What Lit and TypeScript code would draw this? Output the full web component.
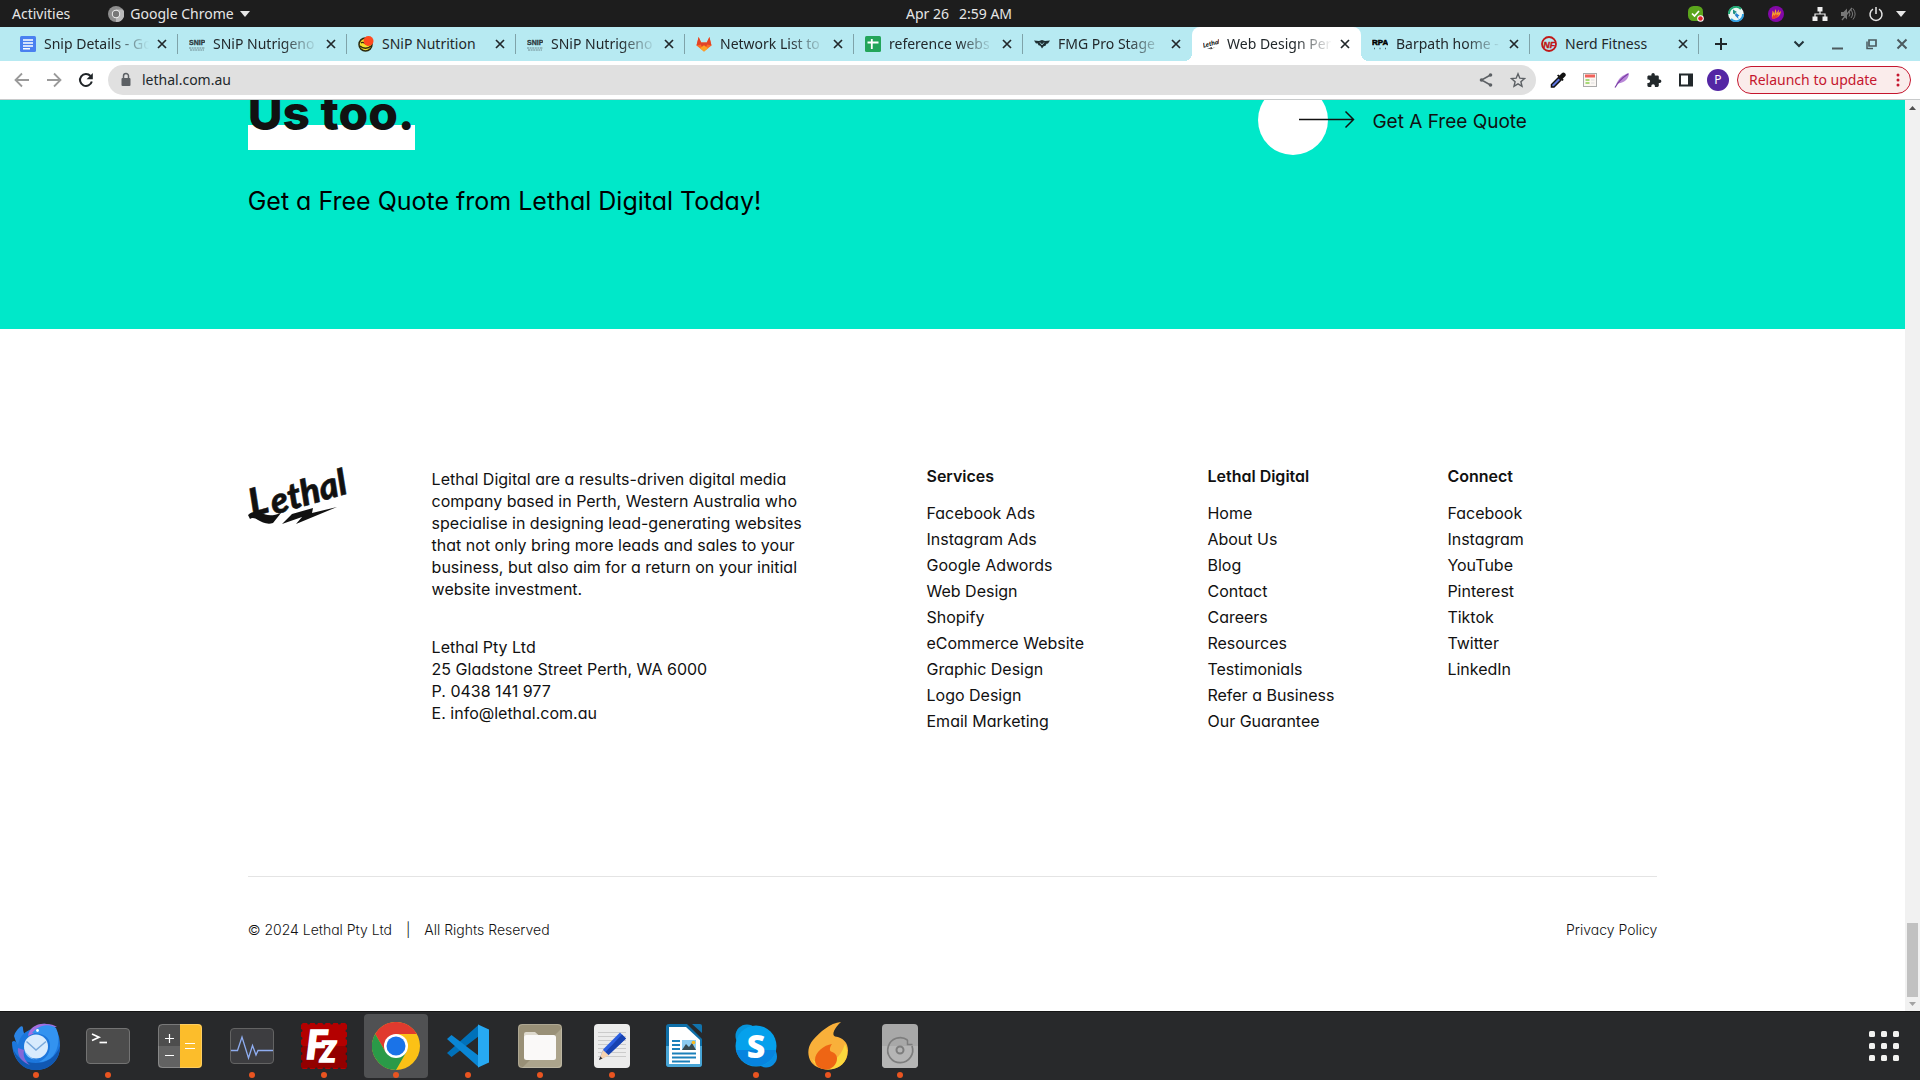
import { LitElement, html, svg, css, nothing, TemplateResult } from "lit";
import { customElement } from "lit/decorators.js";
import { classMap } from "lit/directives/class-map.js";

const icon = (size: number, body: unknown, w = 24, h = 24, width = size) =>
  html`<svg class="icon" width=${width} height=${size} viewBox="0 0 ${w} ${h}" fill="none" aria-hidden="true">${body}</svg>`;

/* ---------- favicons (16 x 16) ---------- */
const favDocs = svg`<rect x="0" y="0" width="16" height="16" rx="1.5" fill="#4a80f0"/><path d="M3 4h10M3 7h10M3 9.900h10M3 12.700h7" stroke="#fff" stroke-width="1.500"/>`;
const favSnip = svg`<text x="0" y="9" font-family="Liberation Sans Narrow, Liberation Sans" font-weight="700" font-size="7" fill="#2c3a40" stroke="#2c3a40" stroke-width=".3">SNiP</text><path d="M0 12h16M1 14h14" stroke="#6f8a90" stroke-width="1" stroke-dasharray="2 .6"/>`;
const favNutrition = svg`<circle cx="7.500" cy="8.500" r="6.500" fill="#f4e02c" stroke="#2c2a10" stroke-width="1.500"/><path d="M2 10c3 3 8 3 11 0M3 7c2-2 4 1 7 2" stroke="#2c2a10" stroke-width="1.300"/><circle cx="10.500" cy="5" r="5" fill="#ff4a1f"/>`;
const favGitlab = svg`<path d="M8 15.500L.5 9.500 2.600 1l2.600 5.500h5.600L13.400 1l2.100 8.500z" fill="#fc6d26"/><path d="M.5 9.500L2.600 1l2.600 5.500h5.600L13.400 1l2.100 8.500-4.300-1L8 15.500 4.800 8.500z" fill="#e24329"/><path d="M8 15.500L4 12.300l4-3 4 3z" fill="#fca326"/>`;
const favSheets = svg`<rect x="0" y="0" width="16" height="16" rx="1.500" fill="#23a55a"/><path d="M2.500 6.500h11M6.800 3v10" stroke="#fff" stroke-width="1.800"/>`;
const favFmg = svg`<path d="M0 4.500l5 .5 3-1 3 1 5-.5-2 3-1.500.3-1 2-1.800.4L8 12.500l-1.700-2.800-1.800-.4-1-2L2 7.500z" fill="#1f3034"/><path d="M6 6.500l2 2.500 2-2.500" stroke="#b7eaf2" stroke-width=".8"/>`;
const favLethal = svg`<text x="0" y="10" transform="rotate(-14 7 9)" font-family="Lato" font-style="italic" font-weight="900" font-size="6.500" fill="#111">Lethal</text><path d="M4 13l5-2-.5 1.500 4-1.500-5 2.500.5-1z" fill="#111"/>`;
const favRpa = svg`<text x="0" y="8.500" font-family="Liberation Sans" font-weight="700" font-size="8" fill="#000" stroke="#000" stroke-width=".5">RPA</text><path d="M2 12.500h1M7.500 12.500h1M13 12.500h1" stroke="#47616a" stroke-width="1.500"/>`;
const favNerd = svg`<circle cx="8" cy="8" r="7" stroke="#c01818" stroke-width="1.800"/><text x="2.300" y="11.500" font-family="Liberation Sans" font-style="italic" font-weight="700" font-size="9" fill="#c01818" stroke="#c01818" stroke-width=".4">NF</text>`;

interface Tab { title: string; fav: unknown; active?: boolean; whole?: boolean; }
const TABS: Tab[] = [
  { title: "Snip Details - Go", fav: favDocs },
  { title: "SNiP Nutrigeno", fav: favSnip },
  { title: "SNiP Nutrition", fav: favNutrition, whole: true },
  { title: "SNiP Nutrigeno", fav: favSnip },
  { title: "Network List to", fav: favGitlab },
  { title: "reference webs", fav: favSheets },
  { title: "FMG Pro Stage", fav: favFmg },
  { title: "Web Design Per", fav: favLethal, active: true },
  { title: "Barpath home -", fav: favRpa },
  { title: "Nerd Fitness", fav: favNerd, whole: true },
];

const closeGlyph = icon(10, svg`<path d="M1 1l8 8M9 1l-8 8" stroke="currentColor" stroke-width="1.700"/>`, 10, 10);

/* ---------- dock icons (48 x 48) ---------- */
const thunderbird = svg`
  <path d="M2 14c1-4 3-6 6-9 1-1 3-1 3 1 0 3 1 6 3 8l-6 18z" fill="#2a83e4"/>
  <path d="M0 20c2-2 4-1 6 3 2-10 8-14 14-16 5-5 14-7 21-3 1 1 2 2 3 4 3 4 4 10 4 16 0 14-10 24-24 24S0 36 0 20z" fill="#1c77dd"/>
  <path d="M1 27c4 9 12 14 23 14s20-6 24-17c0 14-10 24-24 24S4 39 1 27z" fill="#1158b2"/>
  <path d="M16 14C17 6 25 1 34 2c5 0 8 1 11 3-5 0-10 0-14 2-5 2-8 4-15 7z" fill="#a46fe0"/>
  <path d="M20 11C26 3 38 1 44 6c4 8 3 20-3 28-4 4-9 6-14 6 8-4 11-9 11-17 0-8-7-12-18-12z" fill="#3393f0"/>
  <path d="M6 26c-1 8 4 14 12 17-6-5-7-10-6-15z" fill="#8468d8"/>
  <circle cx="24" cy="24.500" r="12" fill="#d8ebfd"/>
  <path d="M14.500 19.500L24 28l10-8.500" stroke="#79a9dc" stroke-width="1.500"/>
  <path d="M12.500 29c3 8 8 9 15 8-4 1-7 0-9-2z" fill="#8ac4fa"/>
  <circle cx="25.500" cy="8.500" r="1.400" fill="#fff"/>`;
const terminal = svg`
  <rect x="2.500" y="6.500" width="43" height="35" rx="3.500" fill="#4c4c4c" stroke="#737373"/>
  <path d="M8 12l7 3.200L8 18.500" stroke="#fff" stroke-width="1.700"/><path d="M15.500 20.500h7.500" stroke="#fff" stroke-width="1.700"/>`;
const calculator = svg`
  <rect x="2" y="2" width="44" height="44" rx="4" fill="#4d4d4d"/><path d="M2 24h22v22H6a4 4 0 01-4-4z" fill="#626262"/>
  <path d="M24 2h18a4 4 0 014 4v36a4 4 0 01-4 4H24z" fill="#fcbd2b"/>
  <rect x="2.500" y="2.500" width="43" height="43" rx="4" stroke="#fff" stroke-opacity=".25"/>
  <path d="M13.500 12v9M9 16.500h9M9 33.500h9M29 21.500h10M29 26.500h10" stroke="#fff" stroke-width="1.200"/>`;
const monitor = svg`
  <rect x="2.500" y="6.500" width="43" height="35" rx="3.500" fill="#3d3d40" stroke="#636363"/>
  <path d="M3 28.500h6.500L14 15l6.500 21 4-12.500 3.500 9.500 2-4.500h15" stroke="#8fadf0" stroke-width="1.300"/>`;
const filezilla = svg`
  <rect x="1" y="1" width="46" height="46" fill="#b40000"/>
  <rect x="1" y="1" width="46" height="46" stroke="#27282a" stroke-width="3" stroke-dasharray="0 7.670" stroke-linecap="round"/>
  <path d="M1 24h46v22H1z" fill="#000" fill-opacity=".18"/>
  <g font-family="Lato, sans-serif" font-style="italic" font-weight="900" fill="#fff" stroke="#fff" stroke-width="1.500">
    <text x="6" y="37" font-size="40">F</text><text x="20" y="40" font-size="28">Z</text>
  </g>`;
const chrome = svg`
  <circle cx="24" cy="24" r="24" fill="#fbc116"/>
  <path d="M3.200 12A24 24 0 0144.800 12H24L13.600 30z" fill="#e03a2e"/>
  <path d="M3.200 12L13.600 30 24 36l10.400-6L24 48A24 24 0 013.200 12z" fill="#2a9a48"/>
  <circle cx="24" cy="24" r="12" fill="#fff"/><circle cx="24" cy="24" r="9.500" fill="#1a73e8"/>`;
const vscode = svg`
  <path d="M3 31l4.500 4L35 14V2.500z" fill="#0071ba"/>
  <path d="M3 17l4.500-4L35 34v11.500z" fill="#0a86d4"/>
  <path d="M34 2.500l11 5v33l-11 5z" fill="#27a9f3"/>`;
const files = svg`
  <rect x="2" y="2" width="44" height="44" rx="4" fill="#999077"/><path d="M46 6v36a4 4 0 01-4 4H6z" fill="#aca48c"/>
  <rect x="2.500" y="2.500" width="43" height="43" rx="4" stroke="#fff" stroke-opacity=".2"/>
  <path d="M8 12a2 2 0 012-2h9l4 3.500h13V20H8z" fill="#dedace"/><rect x="8" y="13" width="32" height="25" rx="2.500" fill="#faf9f8"/>`;
const editor = svg`
  <rect x="6" y="2" width="36" height="44" rx="4" fill="#ececec"/>
  <path d="M10 10.500h28M10 14.500h28M10 18.500h28M10 22.500h28M10 26.500h28M10 30.500h28M10 34.500h28" stroke="#cbcbcb"/>
  <path d="M11 38l4.500-11L32 10.500l6 6L20.500 33z" fill="#2c5fe0"/><path d="M34 12.500l4 4L20.500 33l-3-3z" fill="#1742b0"/>
  <path d="M11 38l4-10 6 5.500z" fill="#f6d3b0"/><path d="M11 38l1.300-3.500 2.200 2z" fill="#333"/>`;
const writer = svg`
  <path d="M6 5a3 3 0 013-3h18l15 15v25a3 3 0 01-3 3H9a3 3 0 01-3-3z" fill="#0f6fa8"/><path d="M6 24h36v18a3 3 0 01-3 3H9a3 3 0 01-3-3z" fill="#48a5d6"/>
  <path d="M9 5h17l14 13v24H9z" fill="#fff"/><path d="M32 2h8a2 2 0 012 2v7z" fill="#1173ad"/>
  <path d="M12 19h8M12 23h8M12 27h8M12 31.500h24M12 35.500h24M12 39.500h18" stroke="#1b80ba" stroke-width="2"/>
  <rect x="22" y="18" width="14" height="10" fill="#8ccbf0"/><path d="M22 28l4-6 3 3 3-4 4 7z" fill="#384a50"/><circle cx="33.500" cy="20.500" r="1.800" fill="#f9b91c"/>`;
const skype = svg`
  <circle cx="15" cy="14" r="11.500" fill="#0694dc"/><circle cx="34" cy="34.500" r="11" fill="#0b8ee2"/>
  <circle cx="24" cy="24" r="20.500" fill="#05a1ec"/><path d="M4 28a20.500 20.500 0 0040 0z" fill="#0784df"/>
  <text x="24" y="35.500" text-anchor="middle" font-family="Open Sans" font-weight="800" font-size="32" fill="#fff">S</text>`;
const flame = svg`
  <path d="M37 0C26 1 16 10 9 18 4 24 3 31 6 38c3 6 10 9.500 18 9.500 11 0 20-7 20-19 0-8-5-13-13-14-4-2 0-9 6-14.500z" fill="#f9b03a"/>
  <path d="M8 37c6 7 26 8 33-15 6 12-1 25-17 25.500C17 47.500 11 44 8 37z" fill="#fbd83d"/>
  <path d="M28 22c-8 1-17 8-17 16 0 6 5 9.500 11 9.500s11-5 11-11c0-4-3-6-6-7-2-1-1-5 1-7.500z" fill="#ee6514"/>`;
const disk = svg`
  <rect x="6" y="2" width="36" height="44" rx="4" fill="#a8a8a8"/><path d="M6 24h36v18a4 4 0 01-4 4H10a4 4 0 01-4-4z" fill="#b5b5b5"/>
  <path d="M36 24a12.500 12.500 0 11-4.500-6" stroke="#7d7d7d" stroke-width="1.700"/><circle cx="24" cy="28" r="3.500" stroke="#7d7d7d" stroke-width="2"/>
  <path d="M31.500 18v4.500h5" stroke="#7d7d7d" stroke-width="1.500"/>`;

interface DockItem { name: string; art: unknown; running: boolean; focused?: boolean; }
const DOCK: DockItem[] = [
  { name: "Thunderbird Mail", art: thunderbird, running: true },
  { name: "Terminal", art: terminal, running: true },
  { name: "Calculator", art: calculator, running: false },
  { name: "System Monitor", art: monitor, running: true },
  { name: "FileZilla", art: filezilla, running: true },
  { name: "Google Chrome", art: chrome, running: true, focused: true },
  { name: "Visual Studio Code", art: vscode, running: true },
  { name: "Files", art: files, running: true },
  { name: "Text Editor", art: editor, running: true },
  { name: "LibreOffice Writer", art: writer, running: false },
  { name: "Skype", art: skype, running: true },
  { name: "Flameshot", art: flame, running: true },
  { name: "Disks", art: disk, running: true },
];

const reset = css`
  * { box-sizing: border-box; }
  button { font: inherit; color: inherit; background: none; border: 0; padding: 0; margin: 0; display: flex; align-items: center; justify-content: center; cursor: pointer; }
  a { color: inherit; text-decoration: none; }
  ul { list-style: none; margin: 0; padding: 0; }
  .icon { display: block; flex: none; }
`;

@customElement("top-panel")
class TopPanel extends LitElement {
  static styles = [reset, css`
    :host { display: grid; grid-template-columns: 1fr auto 1fr; align-items: center; height: 27px; padding: 0 14px 0 12px; background: #1d1d1d; color: #e6e6e6; font: 14px/27px "Noto Sans", "Open Sans", sans-serif; }
    .left { display: flex; gap: 38px; }
    .app { gap: 6px; }
    .clock { gap: 10px; }
    .tray { display: flex; justify-content: flex-end; align-items: center; gap: 24px; }
    .system { gap: 12px; margin-left: 4px; }
  `];
  render() {
    return html`
      <div class="left">
        <button>Activities</button>
        <button class="app">
          ${icon(16, svg`<circle cx="8" cy="8" r="8" fill="#8d8d8d"/><path d="M8 8V3.500h7A8 8 0 018 16z" fill="#b9b9b9"/><circle cx="8" cy="8" r="4.200" fill="#eee"/><circle cx="8" cy="8" r="3.200" fill="#777"/>`, 16, 16)}
          <span>Google Chrome</span>
          ${icon(6, svg`<path d="M0 0h10L5 6z" fill="#e6e6e6"/>`, 10, 6, 10)}
        </button>
      </div>
      <button class="clock"><span>Apr 26</span><span>2:59 AM</span></button>
      <div class="tray">
        <button aria-label="Skype">${icon(16, svg`<rect x="0" y="0" width="15" height="15" rx="5.500" fill="#5ba51c"/><path d="M4 7.500l2.500 2.500L11 5" stroke="#fff" stroke-width="1.700"/><circle cx="12.500" cy="12.500" r="3.300" fill="#fff"/><circle cx="12.500" cy="12.500" r="2.300" fill="#e0222c"/>`, 16, 16)}</button>
        <button aria-label="Sync">${icon(16, svg`<circle cx="8" cy="8" r="7.800" fill="#eef8f6"/><path d="M1 8a7 7 0 0112-5" stroke="#1fa873" stroke-width="2"/><path d="M15 8a7 7 0 01-12 5" stroke="#2f9fe0" stroke-width="2"/><path d="M5 3.500l4 2.500-2 1 1 2-3-1.500z" fill="#1e8f86"/><path d="M8 7l3.500 2.500-1.500 1 .5 2.500L7 9.500z" fill="#2783d4"/>`, 16, 16)}</button>
        <button aria-label="Flameshot">${icon(16, svg`<circle cx="8" cy="8" r="8" fill="#8408a8"/><path d="M4 12.500c-.5-3 .5-5 .5-8 1 1 1.500 2 1.700 3.500L7.500 3c.8 1.500 1 3 .8 4.500L11 3.500c0 1.500-.3 2.500-.5 3.500l2.500-2c-.5 4.500-3 7.500-9 7.500z" fill="#f6a12c"/><path d="M4 13c0-2 .8-3.500 2-4.500v1.500L8.500 7.500v2L11 8c-.8 3-3 5-7 5z" fill="#e83a30"/>`, 16, 16)}</button>
        <button class="system" aria-label="System menu">
          ${icon(16, svg`<rect x="5.500" y="1" width="5" height="4.500" fill="#eee"/><rect x="0.500" y="10.500" width="5" height="4.500" fill="#eee"/><rect x="10.500" y="10.500" width="5" height="4.500" fill="#eee"/><path d="M8 5v3M3 11V8h10v3" stroke="#eee" stroke-width="1.200"/>`, 16, 16)}
          ${icon(16, svg`<path d="M1 6h2.500L7 2.500v11L3.500 10H1z" fill="#777"/><path d="M9 5.500a4 4 0 010 5M11 4a6.500 6.500 0 010 8M13 2.500a9 9 0 010 11" stroke="#777"/><path d="M2 14L12 2" stroke="#777" stroke-width="1.300"/>`, 16, 16)}
          ${icon(16, svg`<path d="M5 3.200a6 6 0 106 0" stroke="#e6e6e6" stroke-width="1.500"/><path d="M8 1v7" stroke="#e6e6e6" stroke-width="1.500"/>`, 16, 16)}
          ${icon(6, svg`<path d="M0 0h10L5 6z" fill="#e6e6e6"/>`, 10, 6, 10)}
        </button>
      </div>`;
  }
}

@customElement("browser-chrome")
class BrowserChrome extends LitElement {
  static styles = [reset, css`
    :host { display: block; font: 14px/20px "Noto Sans", "Open Sans", sans-serif; color: #22282b; }
    .strip { display: flex; height: 34px; padding-left: 9px; background: #b7eaf2; }
    .tabs { display: flex; flex: 0 1 1690px; min-width: 0; }
    .tab { flex: 1 1 0; min-width: 0; display: flex; align-items: center; padding: 0 7px 0 11px; position: relative; }
    .tab::after { content: ""; position: absolute; right: 0; top: 7px; width: 1px; height: 20px; background: #7fa3a9; }
    .tab.active { background: #fff; border-radius: 8px 8px 0 0; }
    .tab.active::before, .tab.active::after { content: ""; position: absolute; top: auto; bottom: 0; width: 8px; height: 8px; }
    .tab.active::before { left: -8px; background: radial-gradient(circle at 0 0, #b7eaf2 8px, #fff 8px); }
    .tab.active::after { right: -8px; background: radial-gradient(circle at 100% 0, #b7eaf2 8px, #fff 8px); z-index: 1; }
    .tab.before::after { display: none; }
    .label { flex: 1; min-width: 0; display: flex; justify-content: flex-start; gap: 8px; align-items: center; }
    .title { flex: 1; min-width: 0; overflow: hidden; white-space: nowrap; text-align: left; -webkit-mask-image: linear-gradient(90deg, #000 calc(100% - 36px), transparent); mask-image: linear-gradient(90deg, #000 calc(100% - 36px), transparent); }
    .tab.whole .title { -webkit-mask-image: none; mask-image: none; }
    .close { width: 18px; height: 18px; margin-left: 4px; }
    .add { width: 44px; }
    .window { margin-left: auto; display: flex; align-items: center; gap: 16px; padding-right: 11px; color: #4c5b5f; }
    .search { margin-right: 8px; }
    .toolbar { display: flex; align-items: center; height: 39px; padding-right: 9px; background: #fff; border-bottom: 1px solid #c8cacb; }
    .nav { display: flex; gap: 16px; padding: 0 14px; }
    .omnibox { flex: 1; display: flex; align-items: center; height: 30px; padding: 0 10px; border-radius: 15px; background: #e0e0e0; gap: 8px; }
    .omnibox input { flex: 1; min-width: 0; border: 0; outline: 0; padding: 0; background: none; font: inherit; color: #22282b; }
    .actions { display: flex; gap: 16px; }
    .extensions { display: flex; align-items: center; gap: 16px; padding: 0 8px 0 14px; }
    .avatar { width: 22px; height: 22px; margin-left: -3px; border-radius: 50%; background: #5426a4; color: #fff; font-size: 12px; }
    .relaunch { width: 174px; height: 28px; padding: 0 10px 0 11px; justify-content: space-between; border: 1px solid #c5162e; border-radius: 14px; background: #faeceb; color: #c5162e; white-space: nowrap; }
  `];

  private tab(t: Tab, i: number): TemplateResult {
    const cls = classMap({ tab: true, active: !!t.active, before: !!TABS[i + 1]?.active, whole: !!t.whole });
    return html`<div class=${cls}>
      <button class="label">${icon(16, t.fav, 16, 16)}<span class="title">${t.title}</span></button>
      <button class="close" aria-label="Close tab">${closeGlyph}</button>
    </div>`;
  }

  render() {
    return html`
      <div class="strip">
        <div class="tabs">${TABS.map((t, i) => this.tab(t, i))}</div>
        <button class="add" aria-label="New tab">${icon(14, svg`<path d="M7 1v12M1 7h12" stroke="#20282b" stroke-width="2"/>`, 14, 14)}</button>
        <div class="window">
          <button class="search" aria-label="Search tabs">${icon(16, svg`<path d="M3.500 5.500L8 10l4.500-4.500" stroke="#22343a" stroke-width="2"/>`, 16, 16)}</button>
          <button aria-label="Minimize">${icon(16, svg`<path d="M1 12.500h11" stroke="currentColor" stroke-width="2"/>`, 16, 16)}</button>
          <button aria-label="Restore">${icon(16, svg`<path d="M6 4h7v6H6z" stroke="currentColor" stroke-width="1.700"/><path d="M4 5.500v7h6" stroke="currentColor" stroke-width="1.500"/>`, 16, 16)}</button>
          <button aria-label="Close window">${icon(14, svg`<path d="M2.500 2.500l9 9M11.500 2.500l-9 9" stroke="currentColor" stroke-width="2"/>`, 14, 14)}</button>
        </div>
      </div>
      <div class="toolbar">
        <div class="nav">
          <button aria-label="Back">${icon(16, svg`<path d="M15 8H2M8 1.500L1.500 8 8 14.500" stroke="#9a9a9a" stroke-width="1.800"/>`, 16, 16)}</button>
          <button aria-label="Forward">${icon(16, svg`<path d="M1 8h13M8 1.500L14.500 8 8 14.500" stroke="#9a9a9a" stroke-width="1.800"/>`, 16, 16)}</button>
          <button aria-label="Reload">${icon(16, svg`<path d="M13.800 9.500A6 6 0 1112.500 4" stroke="#1f2427" stroke-width="2"/><path d="M14.800 1v6.200H8.600z" fill="#1f2427"/>`, 16, 16)}</button>
        </div>
        <div class="omnibox">
          ${icon(16, svg`<rect x="3.500" y="6" width="9" height="8" rx="1" fill="#5c6064"/><path d="M5.500 6.500V4a2.500 2.500 0 015 0v2.500" stroke="#5c6064" stroke-width="1.500"/>`, 16, 16)}
          <input aria-label="Address and search bar" value="lethal.com.au" />
          <div class="actions">
            <button aria-label="Share">${icon(16, svg`<path d="M12.500 3L3.500 8l9 5" stroke="#5c6064" stroke-width="1.500"/><circle cx="12.500" cy="3" r="1.800" fill="#5c6064"/><circle cx="3.500" cy="8" r="1.800" fill="#5c6064"/><circle cx="12.500" cy="13" r="1.800" fill="#5c6064"/>`, 16, 16)}</button>
            <button aria-label="Bookmark">${icon(16, svg`<path d="M8 1.800l1.800 4.400 4.700.4-3.600 3.100 1.100 4.600-4-2.500-4 2.500 1.100-4.600L1.500 6.600l4.700-.4z" stroke="#5c6064" stroke-width="1.400"/>`, 16, 16)}</button>
          </div>
        </div>
        <div class="extensions">
          <button aria-label="Color picker">${icon(16, svg`<path d="M8.500 5.500l2.500 2.500-7 7H1.500v-2.500z" fill="#5d74e0" stroke="#111" stroke-width="1.500"/><path d="M7 3.500L12.500 9l1.200-1.200-1-1 2.300-2.300a2.200 2.200 0 00-3.200-3.200L9.500 3.600l-1.200-1.200z" fill="#111"/>`, 16, 16)}</button>
          <button aria-label="Clipping extension">${icon(16, svg`<rect x="1.500" y="1.500" width="13" height="13" fill="#fbf7f3" stroke="#aaa"/><path d="M3 4h10" stroke="#f0625b" stroke-width="3"/><path d="M3.500 8h4M3.500 11h4" stroke="#8bcf4d" stroke-width="1.500"/><path d="M9 8h3.500M9 11h3.500" stroke="#ddd"/>`, 16, 16)}</button>
          <button aria-label="Feather extension">${icon(16, svg`<path d="M2 13C4 7 8 3 15 1c0 5-4 10-11 10.500z" fill="#b987d8"/><path d="M1 15.500C4 10 8 6 14 2" stroke="#7b3fa6" stroke-width="1.200"/>`, 16, 16)}</button>
          <button aria-label="Extensions">${icon(16, svg`<path d="M13.700 7.500h-.9V4.800c0-.8-.6-1.300-1.300-1.300H8.800v-.9a1.700 1.700 0 00-3.400 0v.9H2.700c-.7 0-1.300.6-1.300 1.300v2.600h.9a1.800 1.800 0 010 3.600h-.9v2.600c0 .7.600 1.300 1.300 1.300h2.600V14a1.800 1.800 0 013.600 0v.9h2.600c.7 0 1.300-.6 1.300-1.300v-2.700h.9a1.700 1.700 0 000-3.400z" fill="#22282b"/>`, 16, 16)}</button>
          <button aria-label="Side panel">${icon(16, svg`<path d="M2 2.500h12v11H2z" stroke="#22282b" stroke-width="2"/><path d="M10 2h4v12h-4z" fill="#22282b"/>`, 16, 16)}</button>
          <button class="avatar" aria-label="Profile P">P</button>
        </div>
        <button class="relaunch"><span>Relaunch to update</span>${icon(14, svg`<circle cx="2" cy="2" r="1.500" fill="#c5162e"/><circle cx="2" cy="7" r="1.500" fill="#c5162e"/><circle cx="2" cy="12" r="1.500" fill="#c5162e"/>`, 4, 14, 4)}</button>
      </div>`;
  }
}

const COLUMNS = [
  { head: "Services", links: ["Facebook Ads", "Instagram Ads", "Google Adwords", "Web Design", "Shopify", "eCommerce Website", "Graphic Design", "Logo Design", "Email Marketing"] },
  { head: "Lethal Digital", links: ["Home", "About Us", "Blog", "Contact", "Careers", "Resources", "Testimonials", "Refer a Business", "Our Guarantee"] },
  { head: "Connect", links: ["Facebook", "Instagram", "YouTube", "Pinterest", "Tiktok", "Twitter", "LinkedIn"] },
];

@customElement("web-page")
class WebPage extends LitElement {
  static styles = [reset, css`
    :host { display: flex; min-height: 0; overflow: hidden; background: #fff; color: #111; font: 400 16px/22px Inter, Lato, sans-serif; font-feature-settings: "cv11"; }
    .page { flex: 1; min-width: 0; display: flex; flex-direction: column; justify-content: flex-end; overflow: hidden; }
    .wrap { width: 74%; margin: 0 auto; }
    .cta { background: #00e8c9; padding-bottom: 112px; }
    .cta .wrap { display: grid; grid-template-columns: 1011fr 399fr; }
    h2 { display: flex; margin: 0 0 35px; font-size: 48px; line-height: 50px; font-weight: 800; }
    .mark { padding-bottom: 12px; background: linear-gradient(transparent 37px, #fff 37px); }
    .sub { margin: 0; font-size: 25px; line-height: 32px; color: #000; }
    .quote { display: flex; align-items: center; align-self: start; gap: 17px; font-size: 19px; white-space: nowrap; margin-top: -3px; }
    .quote span { padding-top: 4px; }
    footer { padding: 134px 0 70px; }
    .cols { display: grid; grid-template-columns: 184fr 495fr 281fr 240fr 210fr; min-height: 413px; }
    .about p, .about address { margin: 0; font-style: normal; }
    .about { padding-top: 5px; white-space: nowrap; }
    .about address { margin-top: 36px; }
    h3 { margin: 2px 0 13px; font-size: 16px; line-height: 22px; font-weight: 600; }
    li { line-height: 26px; white-space: nowrap; }
    .logo { display: block; margin-top: 6px; }
    .logo .icon { overflow: visible; }
    .legal { display: flex; gap: 14px; border-top: 1px solid #e4e4e4; padding-top: 42px; font-weight: 300; font-size: 14px; line-height: 22px; }
    .legal .privacy { margin-left: auto; }
    .scroll { width: 15px; background: #f1f1f1; display: flex; flex-direction: column; align-items: center; padding: 6px 0 5px; }
    .thumb { width: 11px; height: 74px; margin: auto 0 5px; background: #c1c1c1; }
  `];
  render() {
    return html`
      <div class="page">
        <section class="cta">
          <div class="wrap">
            <div>
              <h2><span class="mark">Us too.</span></h2>
              <p class="sub">Get a Free Quote from Lethal Digital Today!</p>
            </div>
            <a class="quote" href="#quote">
              <svg class="icon" width="97" height="70" viewBox="0 0 97 70" fill="none" aria-hidden="true">
                <circle cx="35" cy="35" r="35" fill="#fff"/>
                <path d="M41 34.500h55M87.500 26.500l8 8-8 8" stroke="#111" stroke-width="1.500"/>
              </svg>
              <span>Get A Free Quote</span>
            </a>
          </div>
        </section>
        <footer>
          <div class="wrap">
            <div class="cols">
              <a class="logo" href="#home" aria-label="Lethal">
                <svg class="icon" width="104" height="56" viewBox="0 0 104 56" aria-hidden="true">
                  <g transform="rotate(-16 0 49)" fill="#111" stroke="#111" stroke-width=".6" font-family="Lato, sans-serif" font-style="italic" font-weight="900">
                    <text x="5" y="49" font-size="38">L</text><text x="26" y="53" font-size="36">ethal</text>
                  </g>
                  <path d="M0 46c4-4 9-4 13-2 5 2 10 4 20 0l-8 10c-6 2-11-1-15-3-3-2-6-3-8-1z" fill="#111"/>
                  <path d="M44 45l21-6-1 5 25-6-41 17 6-7-20 7z" fill="#111"/>
                </svg>
              </a>
              <div class="about">
                <p>Lethal Digital are a results-driven digital media<br>company based in Perth, Western Australia who<br>specialise in designing lead-generating websites<br>that not only bring more leads and sales to your<br>business, but also aim for a return on your initial<br>website investment.</p>
                <address>Lethal Pty Ltd<br>25 Gladstone Street Perth, WA 6000<br>P. <a href="tel:0438141977">0438 141 977</a><br>E. <a href="mailto:info@lethal.com.au">info@lethal.com.au</a></address>
              </div>
              ${COLUMNS.map((c) => html`<nav aria-label=${c.head}><h3>${c.head}</h3><ul>${c.links.map((l) => html`<li><a href="#">${l}</a></li>`)}</ul></nav>`)}
            </div>
            <div class="legal"><span>© 2024 Lethal Pty Ltd</span><span>|</span><span>All Rights Reserved</span><a class="privacy" href="#privacy">Privacy Policy</a></div>
          </div>
        </footer>
      </div>
      <div class="scroll">
        ${icon(4, svg`<path d="M0 4h7L3.500 0z" fill="#505050"/>`, 7, 4, 7)}
        <div class="thumb"></div>
        ${icon(4, svg`<path d="M0 0h7L3.500 4z" fill="#a3a3a3"/>`, 7, 4, 7)}
      </div>`;
  }
}

@customElement("app-dock")
class AppDock extends LitElement {
  static styles = [reset, css`
    :host { display: flex; align-items: center; height: 68px; padding: 0 4px; background: #28292b; border-top: 1px solid #151515; }
    .apps { display: flex; gap: 8px; }
    .app { width: 64px; height: 64px; border-radius: 4px; position: relative; }
    .focused { background: #505153; }
    .dot { position: absolute; left: 29px; bottom: 0; width: 6px; height: 6px; border-radius: 50%; background: #e95420; }
    .grid { margin-left: auto; width: 64px; height: 64px; }
  `];
  render() {
    return html`
      <div class="apps">
        ${DOCK.map((d) => html`<button class=${classMap({ app: true, focused: !!d.focused })} aria-label=${d.name}>
          ${icon(48, d.art, 48, 48)}${d.running ? html`<span class="dot"></span>` : nothing}
        </button>`)}
      </div>
      <button class="grid" aria-label="Show applications">
        ${icon(30, [0, 12, 24].map((y) => [0, 12, 24].map((x) => svg`<rect x=${x} y=${y} width="6" height="6" rx="1.500" fill="#f2f2f0"/>`)), 30, 30)}
      </button>`;
  }
}

@customElement("app-root")
class AppRoot extends LitElement {
  static styles = css`
    :host { display: flex; flex-direction: column; height: 100vh; overflow: hidden; }
    web-page { flex: 1; }
    top-panel, browser-chrome, app-dock { flex: none; }
  `;
  render() {
    return html`<top-panel></top-panel><browser-chrome></browser-chrome><web-page></web-page><app-dock></app-dock>`;
  }
}
